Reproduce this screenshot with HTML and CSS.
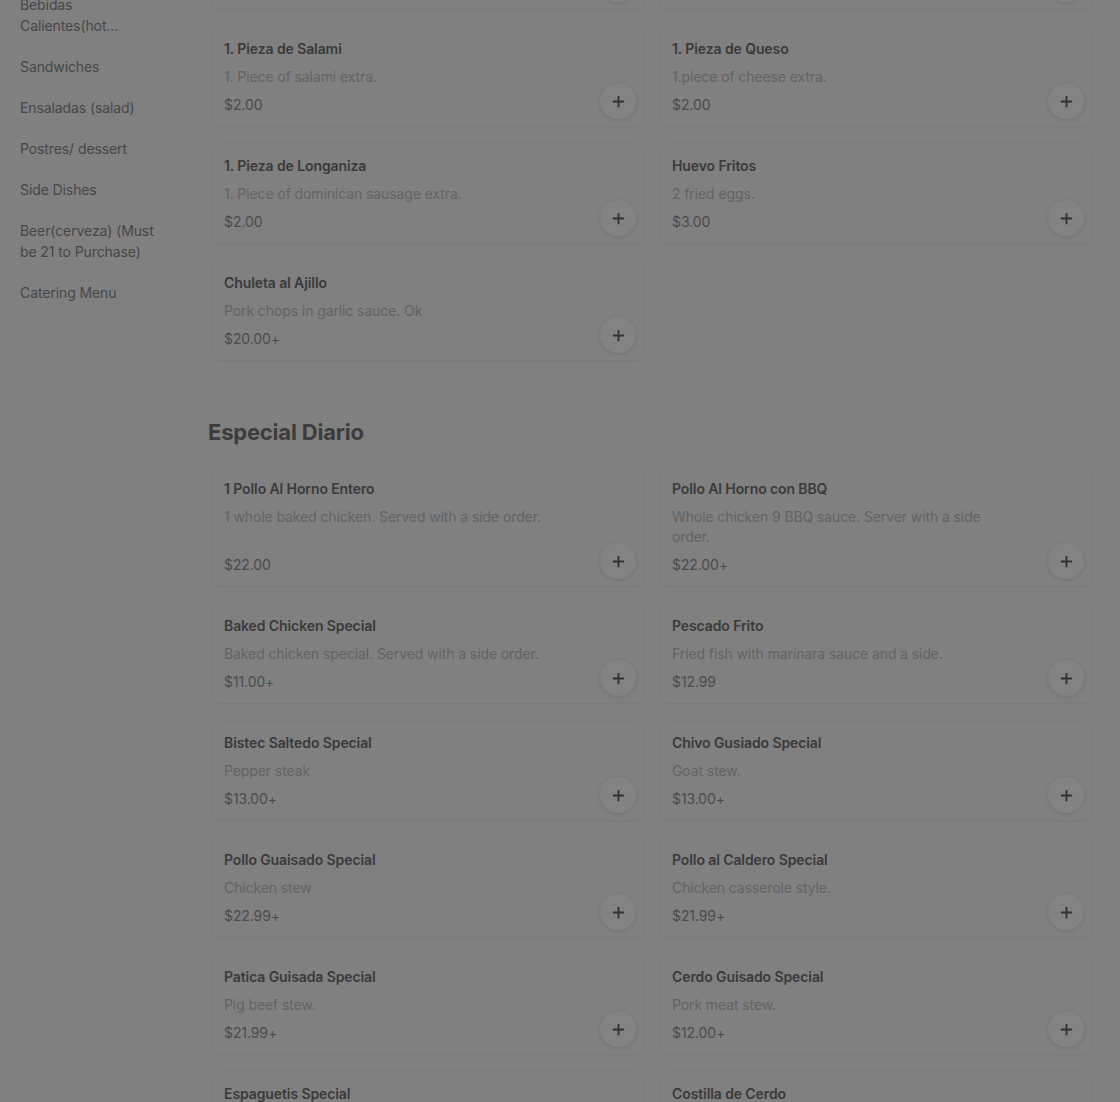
FILE: index.html
```html
<!DOCTYPE html>
<html lang="es">
<head>
<meta charset="utf-8">
<title>Menu</title>
<link rel="stylesheet" href="styles.css">
</head>
<body>
<div class="page">
  <nav class="sidebar">
    <a class="cat clamp">Bebidas Calientes(hot beverages)</a>
    <a class="cat">Sandwiches</a>
    <a class="cat">Ensaladas (salad)</a>
    <a class="cat">Postres/ dessert</a>
    <a class="cat">Side Dishes</a>
    <a class="cat">Beer(cerveza) (Must be 21 to Purchase)</a>
    <a class="cat">Catering Menu</a>
  </nav>
  <main class="main">
    <section class="section section-first">
      <div class="grid">
        <div class="card"><div class="title">1. Pieza de Jamón</div><div class="desc">1. Piece of ham extra.</div><div class="price">$2.00</div><button class="add"><svg viewBox="0 0 16 16"><path d="M8 2v12M2 8h12"/></svg></button></div>
        <div class="card"><div class="title">1. Pieza de Tocino</div><div class="desc">1. Piece of bacon extra.</div><div class="price">$2.00</div><button class="add"><svg viewBox="0 0 16 16"><path d="M8 2v12M2 8h12"/></svg></button></div>
        <div class="card"><div class="title">1. Pieza de Salami</div><div class="desc">1. Piece of salami extra.</div><div class="price">$2.00</div><button class="add"><svg viewBox="0 0 16 16"><path d="M8 2v12M2 8h12"/></svg></button></div>
        <div class="card"><div class="title">1. Pieza de Queso</div><div class="desc">1.piece of cheese extra.</div><div class="price">$2.00</div><button class="add"><svg viewBox="0 0 16 16"><path d="M8 2v12M2 8h12"/></svg></button></div>
        <div class="card"><div class="title">1. Pieza de Longaniza</div><div class="desc">1. Piece of dominican sausage extra.</div><div class="price">$2.00</div><button class="add"><svg viewBox="0 0 16 16"><path d="M8 2v12M2 8h12"/></svg></button></div>
        <div class="card"><div class="title">Huevo Fritos</div><div class="desc">2 fried eggs.</div><div class="price">$3.00</div><button class="add"><svg viewBox="0 0 16 16"><path d="M8 2v12M2 8h12"/></svg></button></div>
        <div class="card"><div class="title">Chuleta al Ajillo</div><div class="desc">Pork chops in garlic sauce. Ok</div><div class="price">$20.00+</div><button class="add"><svg viewBox="0 0 16 16"><path d="M8 2v12M2 8h12"/></svg></button></div>
      </div>
    </section>
    <section class="section">
      <h2 class="heading">Especial Diario</h2>
      <div class="grid">
        <div class="card"><div class="title">1 Pollo Al Horno Entero</div><div class="desc">1 whole baked chicken. Served with a side order.</div><div class="price">$22.00</div><button class="add"><svg viewBox="0 0 16 16"><path d="M8 2v12M2 8h12"/></svg></button></div>
        <div class="card"><div class="title">Pollo Al Horno con BBQ</div><div class="desc">Whole chicken 9 BBQ sauce. Server with a side order.</div><div class="price">$22.00+</div><button class="add"><svg viewBox="0 0 16 16"><path d="M8 2v12M2 8h12"/></svg></button></div>
        <div class="card"><div class="title">Baked Chicken Special</div><div class="desc">Baked chicken special. Served with a side order.</div><div class="price">$11.00+</div><button class="add"><svg viewBox="0 0 16 16"><path d="M8 2v12M2 8h12"/></svg></button></div>
        <div class="card"><div class="title">Pescado Frito</div><div class="desc">Fried fish with marinara sauce and a side.</div><div class="price">$12.99</div><button class="add"><svg viewBox="0 0 16 16"><path d="M8 2v12M2 8h12"/></svg></button></div>
        <div class="card"><div class="title">Bistec Saltedo Special</div><div class="desc">Pepper steak</div><div class="price">$13.00+</div><button class="add"><svg viewBox="0 0 16 16"><path d="M8 2v12M2 8h12"/></svg></button></div>
        <div class="card"><div class="title">Chivo Gusiado Special</div><div class="desc">Goat stew.</div><div class="price">$13.00+</div><button class="add"><svg viewBox="0 0 16 16"><path d="M8 2v12M2 8h12"/></svg></button></div>
        <div class="card"><div class="title">Pollo Guaisado Special</div><div class="desc">Chicken stew</div><div class="price">$22.99+</div><button class="add"><svg viewBox="0 0 16 16"><path d="M8 2v12M2 8h12"/></svg></button></div>
        <div class="card"><div class="title">Pollo al Caldero Special</div><div class="desc">Chicken casserole style.</div><div class="price">$21.99+</div><button class="add"><svg viewBox="0 0 16 16"><path d="M8 2v12M2 8h12"/></svg></button></div>
        <div class="card"><div class="title">Patica Guisada Special</div><div class="desc">Pig beef stew.</div><div class="price">$21.99+</div><button class="add"><svg viewBox="0 0 16 16"><path d="M8 2v12M2 8h12"/></svg></button></div>
        <div class="card"><div class="title">Cerdo Guisado Special</div><div class="desc">Pork meat stew.</div><div class="price">$12.00+</div><button class="add"><svg viewBox="0 0 16 16"><path d="M8 2v12M2 8h12"/></svg></button></div>
        <div class="card"><div class="title">Espaguetis Special</div><div class="desc">Spaghetti with a side.</div><div class="price">$13.00+</div><button class="add"><svg viewBox="0 0 16 16"><path d="M8 2v12M2 8h12"/></svg></button></div>
        <div class="card"><div class="title">Costilla de Cerdo</div><div class="desc">Pork ribs.</div><div class="price">$15.00+</div><button class="add"><svg viewBox="0 0 16 16"><path d="M8 2v12M2 8h12"/></svg></button></div>
      </div>
    </section>
  </main>
</div>
</body>
</html>
```
FILE: styles.css
```css
html, body {
  margin: 0;
  padding: 0;
  background: #808080;
  overflow: hidden;
}
body {
  font-family: Inter, "Noto Sans", sans-serif;
  color: #3b3b3b;
  font-size: 14px;
}
.page {
  display: flex;
  align-items: flex-start;
}
.sidebar {
  width: 139px;
  padding: 0 49px 0 20px;
  margin-top: -6px;
  display: flex;
  flex-direction: column;
  gap: 20px;
  flex-shrink: 0;
}
.cat {
  color: #474747;
  font-size: 14px;
  line-height: 21px;
  letter-spacing: -0.1px;
}
.clamp {
  display: -webkit-box;
  -webkit-line-clamp: 2;
  -webkit-box-orient: vertical;
  overflow: hidden;
}
.main {
  flex: 1;
  padding: 0 24px 0 0;
  margin-top: -90px;
}
.section-first {
  margin-bottom: 58px;
}
.heading {
  margin: 0 0 21px 0;
  font-size: 22px;
  line-height: 28px;
  font-weight: 700;
  color: #3c3c3c;
  letter-spacing: -0.2px;
}
.grid {
  display: grid;
  grid-template-columns: 1fr 1fr;
  column-gap: 16px;
  row-gap: 18px;
  padding: 0 4px;
}
.card {
  position: relative;
  display: flex;
  flex-direction: column;
  padding: 14px 12px 11px 12px;
  border-radius: 8px;
  background: #808080;
  box-shadow: 0 0 0 1px rgba(0, 0, 0, 0.025), 0 1px 3px rgba(0, 0, 0, 0.03);
}
.title {
  font-weight: 600;
  font-size: 14px;
  line-height: 16px;
  color: #3a3a3a;
  letter-spacing: -0.1px;
}
.desc {
  margin-top: 10px;
  line-height: 20px;
  color: #636363;
  max-width: 324px;
  flex-grow: 1;
  letter-spacing: -0.1px;
}
.price {
  margin-top: 8px;
  line-height: 20px;
  color: #4c4c4c;
  letter-spacing: -0.1px;
}
.add {
  position: absolute;
  right: 8px;
  bottom: 7px;
  width: 36px;
  height: 36px;
  border-radius: 50%;
  border: none;
  padding: 0;
  background: #838383;
  box-shadow: 0 1px 4px rgba(0, 0, 0, 0.12);
  display: flex;
  align-items: center;
  justify-content: center;
}
.add svg {
  width: 15px;
  height: 15px;
  fill: none;
  stroke: #333333;
  stroke-width: 2;
}
```
